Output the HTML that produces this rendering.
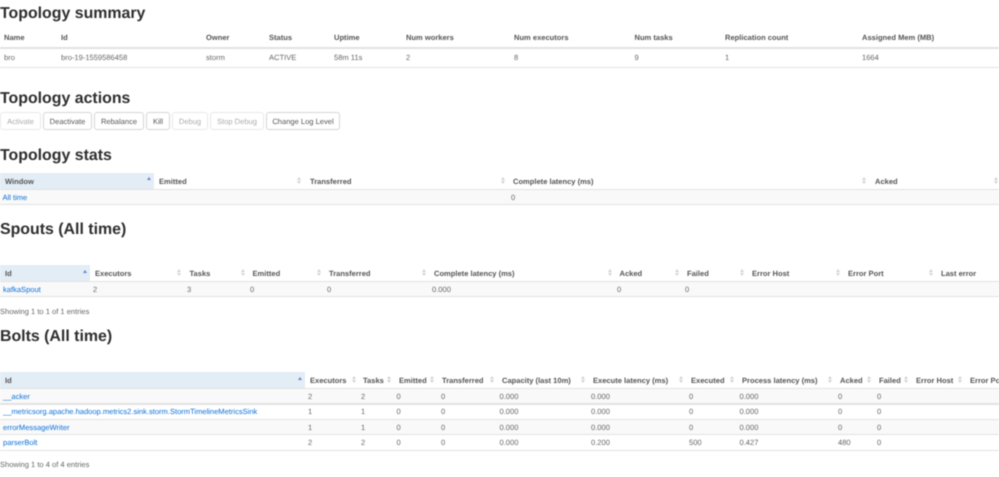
<!DOCTYPE html>
<html><head><meta charset="utf-8"><title>Topology</title>
<style>
html,body{margin:0;padding:0;background:#fff}
#p{position:relative;width:999px;height:477px;overflow:hidden;font-family:"Liberation Sans",sans-serif;font-size:7.55px;color:#666;filter:blur(.4px);text-rendering:geometricPrecision}
#p *{position:absolute}
h1{margin:.4px 0 0;font-size:15.9px;line-height:20px;font-weight:bold;color:#2e2e2e;left:0;white-space:nowrap}
b,i,a{margin-top:.7px;font-style:normal;line-height:14px;white-space:nowrap;text-decoration:none}
b{font-weight:bold;color:#555}
a{color:#0a6fd8}
.l{left:0;width:999px;background:#e2e2e2;height:1px}
.d{height:2px}
.r{left:0;width:999px;background:#f9f9f9}
.h{left:0;background:#e3edf5}
.btn{top:112px;height:16px;line-height:17.4px;border:1px solid #d6d6d6;border-radius:3px;text-align:center;color:#555;background:#fff}
.dis{color:#aaa;border-color:#e8e8e8}
.s{width:0;height:0;border-left:2.2px solid transparent;border-right:2.2px solid transparent;border-bottom:3px solid #d2d2d2;margin-left:-2.2px;margin-top:-4px}
.s::after{content:"";position:absolute;left:-2.2px;top:4px;width:0;height:0;border-left:2.2px solid transparent;border-right:2.2px solid transparent;border-top:3px solid #d2d2d2}
.u{width:0;height:0;border-left:2.5px solid transparent;border-right:2.5px solid transparent;border-bottom:3.5px solid #6f7fd8;margin-left:-2.5px}
</style></head><body><div id="p">

<h1 style="top:4px">Topology summary</h1>
<b style="left:4px;top:30px">Name</b><b style="left:61px;top:30px">Id</b><b style="left:206px;top:30px">Owner</b><b style="left:269px;top:30px">Status</b><b style="left:334px;top:30px">Uptime</b><b style="left:406px;top:30px">Num workers</b><b style="left:514px;top:30px">Num executors</b><b style="left:634.5px;top:30px">Num tasks</b><b style="left:725px;top:30px">Replication count</b><b style="left:862px;top:30px">Assigned Mem (MB)</b>
<div class="l d" style="top:47px"></div>
<i style="left:4px;top:50px">bro</i><i style="left:61px;top:50px">bro-19-1559586458</i><i style="left:206px;top:50px">storm</i><i style="left:269px;top:50px">ACTIVE</i><i style="left:334px;top:50px">58m 11s</i><i style="left:406px;top:50px">2</i><i style="left:514px;top:50px">8</i><i style="left:634.5px;top:50px">9</i><i style="left:725px;top:50px">1</i><i style="left:862px;top:50px">1664</i>
<div class="l" style="top:67px"></div>

<h1 style="top:89px">Topology actions</h1>
<div class="btn dis" style="left:0;width:39px">Activate</div>
<div class="btn" style="left:43px;width:47px">Deactivate</div>
<div class="btn" style="left:94px;width:48px">Rebalance</div>
<div class="btn" style="left:146px;width:22px">Kill</div>
<div class="btn dis" style="left:172px;width:34px">Debug</div>
<div class="btn dis" style="left:210px;width:52px">Stop Debug</div>
<div class="btn" style="left:266px;width:72px">Change Log Level</div>

<h1 style="top:146px">Topology stats</h1>
<div class="h" style="top:173px;width:154px;height:16px"></div>
<div class="r" style="top:190px;height:14px"></div>
<b style="left:5px;top:174px">Window</b><b style="left:159px;top:174px">Emitted</b><b style="left:310px;top:174px">Transferred</b><b style="left:513px;top:174px">Complete latency (ms)</b><b style="left:875px;top:174px">Acked</b>
<span class="u" style="left:149px;top:177px"></span><span class="s" style="left:299.5px;top:181px"></span><span class="s" style="left:503px;top:181px"></span><span class="s" style="left:864.5px;top:181px"></span><span class="s" style="left:996px;top:181px"></span>
<div class="l" style="top:189px"></div>
<a style="left:2.5px;top:190px">All time</a><i style="left:511px;top:190px">0</i>
<div class="l" style="top:204px"></div>

<h1 style="top:220px">Spouts (All time)</h1>
<div class="h" style="top:265px;width:90px;height:16px"></div>
<div class="r" style="top:282px;height:14px"></div>
<b style="left:5px;top:266px">Id</b><b style="left:95px;top:266px">Executors</b><b style="left:189.5px;top:266px">Tasks</b><b style="left:252.5px;top:266px">Emitted</b><b style="left:329px;top:266px">Transferred</b><b style="left:434px;top:266px">Complete latency (ms)</b><b style="left:619.5px;top:266px">Acked</b><b style="left:687px;top:266px">Failed</b><b style="left:752px;top:266px">Error Host</b><b style="left:848px;top:266px">Error Port</b><b style="left:941px;top:266px">Last error</b>
<span class="u" style="left:85px;top:270px"></span><span class="s" style="left:179.5px;top:273px"></span><span class="s" style="left:243px;top:273px"></span><span class="s" style="left:319.5px;top:273px"></span><span class="s" style="left:424px;top:273px"></span><span class="s" style="left:610px;top:273px"></span><span class="s" style="left:677px;top:273px"></span><span class="s" style="left:742px;top:273px"></span><span class="s" style="left:838px;top:273px"></span><span class="s" style="left:931px;top:273px"></span>
<div class="l" style="top:281px"></div>
<a style="left:3px;top:282px">kafkaSpout</a><i style="left:93px;top:282px">2</i><i style="left:187px;top:282px">3</i><i style="left:250px;top:282px">0</i><i style="left:327px;top:282px">0</i><i style="left:432px;top:282px">0.000</i><i style="left:617px;top:282px">0</i><i style="left:685px;top:282px">0</i>
<div class="l" style="top:296px"></div>
<i style="left:0;top:304px">Showing 1 to 1 of 1 entries</i>

<h1 style="top:327px">Bolts (All time)</h1>
<div class="h" style="top:372px;width:305px;height:16px"></div>
<div class="r" style="top:389px;height:14px"></div>
<div class="r" style="top:420px;height:14px"></div>
<b style="left:5px;top:373px">Id</b><b style="left:310px;top:373px">Executors</b><b style="left:363px;top:373px">Tasks</b><b style="left:399px;top:373px">Emitted</b><b style="left:442px;top:373px">Transferred</b><b style="left:502px;top:373px">Capacity (last 10m)</b><b style="left:593px;top:373px">Execute latency (ms)</b><b style="left:691px;top:373px">Executed</b><b style="left:742px;top:373px">Process latency (ms)</b><b style="left:840px;top:373px">Acked</b><b style="left:879px;top:373px">Failed</b><b style="left:916px;top:373px">Error Host</b><b style="left:970px;top:373px">Error Port</b>
<span class="u" style="left:300px;top:377px"></span><span class="s" style="left:354px;top:380px"></span><span class="s" style="left:389px;top:380px"></span><span class="s" style="left:432.5px;top:380px"></span><span class="s" style="left:492px;top:380px"></span><span class="s" style="left:583px;top:380px"></span><span class="s" style="left:681px;top:380px"></span><span class="s" style="left:732px;top:380px"></span><span class="s" style="left:830px;top:380px"></span><span class="s" style="left:869px;top:380px"></span><span class="s" style="left:906px;top:380px"></span><span class="s" style="left:960px;top:380px"></span>
<div class="l" style="top:388px"></div>
<a style="left:3px;top:389px">__acker</a><i style="left:308px;top:389px">2</i><i style="left:361px;top:389px">2</i><i style="left:396.5px;top:389px">0</i><i style="left:441px;top:389px">0</i><i style="left:499.5px;top:389px">0.000</i><i style="left:591px;top:389px">0.000</i><i style="left:689px;top:389px">0</i><i style="left:739.5px;top:389px">0.000</i><i style="left:838px;top:389px">0</i><i style="left:877px;top:389px">0</i>
<div class="l d" style="top:403px"></div>
<a style="left:3px;top:404.5px">__metricsorg.apache.hadoop.metrics2.sink.storm.StormTimelineMetricsSink</a><i style="left:308px;top:404.5px">1</i><i style="left:361px;top:404.5px">1</i><i style="left:396.5px;top:404.5px">0</i><i style="left:441px;top:404.5px">0</i><i style="left:499.5px;top:404.5px">0.000</i><i style="left:591px;top:404.5px">0.000</i><i style="left:689px;top:404.5px">0</i><i style="left:739.5px;top:404.5px">0.000</i><i style="left:838px;top:404.5px">0</i><i style="left:877px;top:404.5px">0</i>
<div class="l" style="top:419px"></div>
<a style="left:3px;top:420px">errorMessageWriter</a><i style="left:308px;top:420px">1</i><i style="left:361px;top:420px">1</i><i style="left:396.5px;top:420px">0</i><i style="left:441px;top:420px">0</i><i style="left:499.5px;top:420px">0.000</i><i style="left:591px;top:420px">0.000</i><i style="left:689px;top:420px">0</i><i style="left:739.5px;top:420px">0.000</i><i style="left:838px;top:420px">0</i><i style="left:877px;top:420px">0</i>
<div class="l" style="top:434px"></div>
<a style="left:3px;top:435.5px">parserBolt</a><i style="left:308px;top:435.5px">2</i><i style="left:361px;top:435.5px">2</i><i style="left:396.5px;top:435.5px">0</i><i style="left:441px;top:435.5px">0</i><i style="left:499.5px;top:435.5px">0.000</i><i style="left:591px;top:435.5px">0.200</i><i style="left:689px;top:435.5px">500</i><i style="left:739.5px;top:435.5px">0.427</i><i style="left:838px;top:435.5px">480</i><i style="left:877px;top:435.5px">0</i>
<div class="l" style="top:450px"></div>
<i style="left:0;top:457px">Showing 1 to 4 of 4 entries</i>

</div></body></html>
